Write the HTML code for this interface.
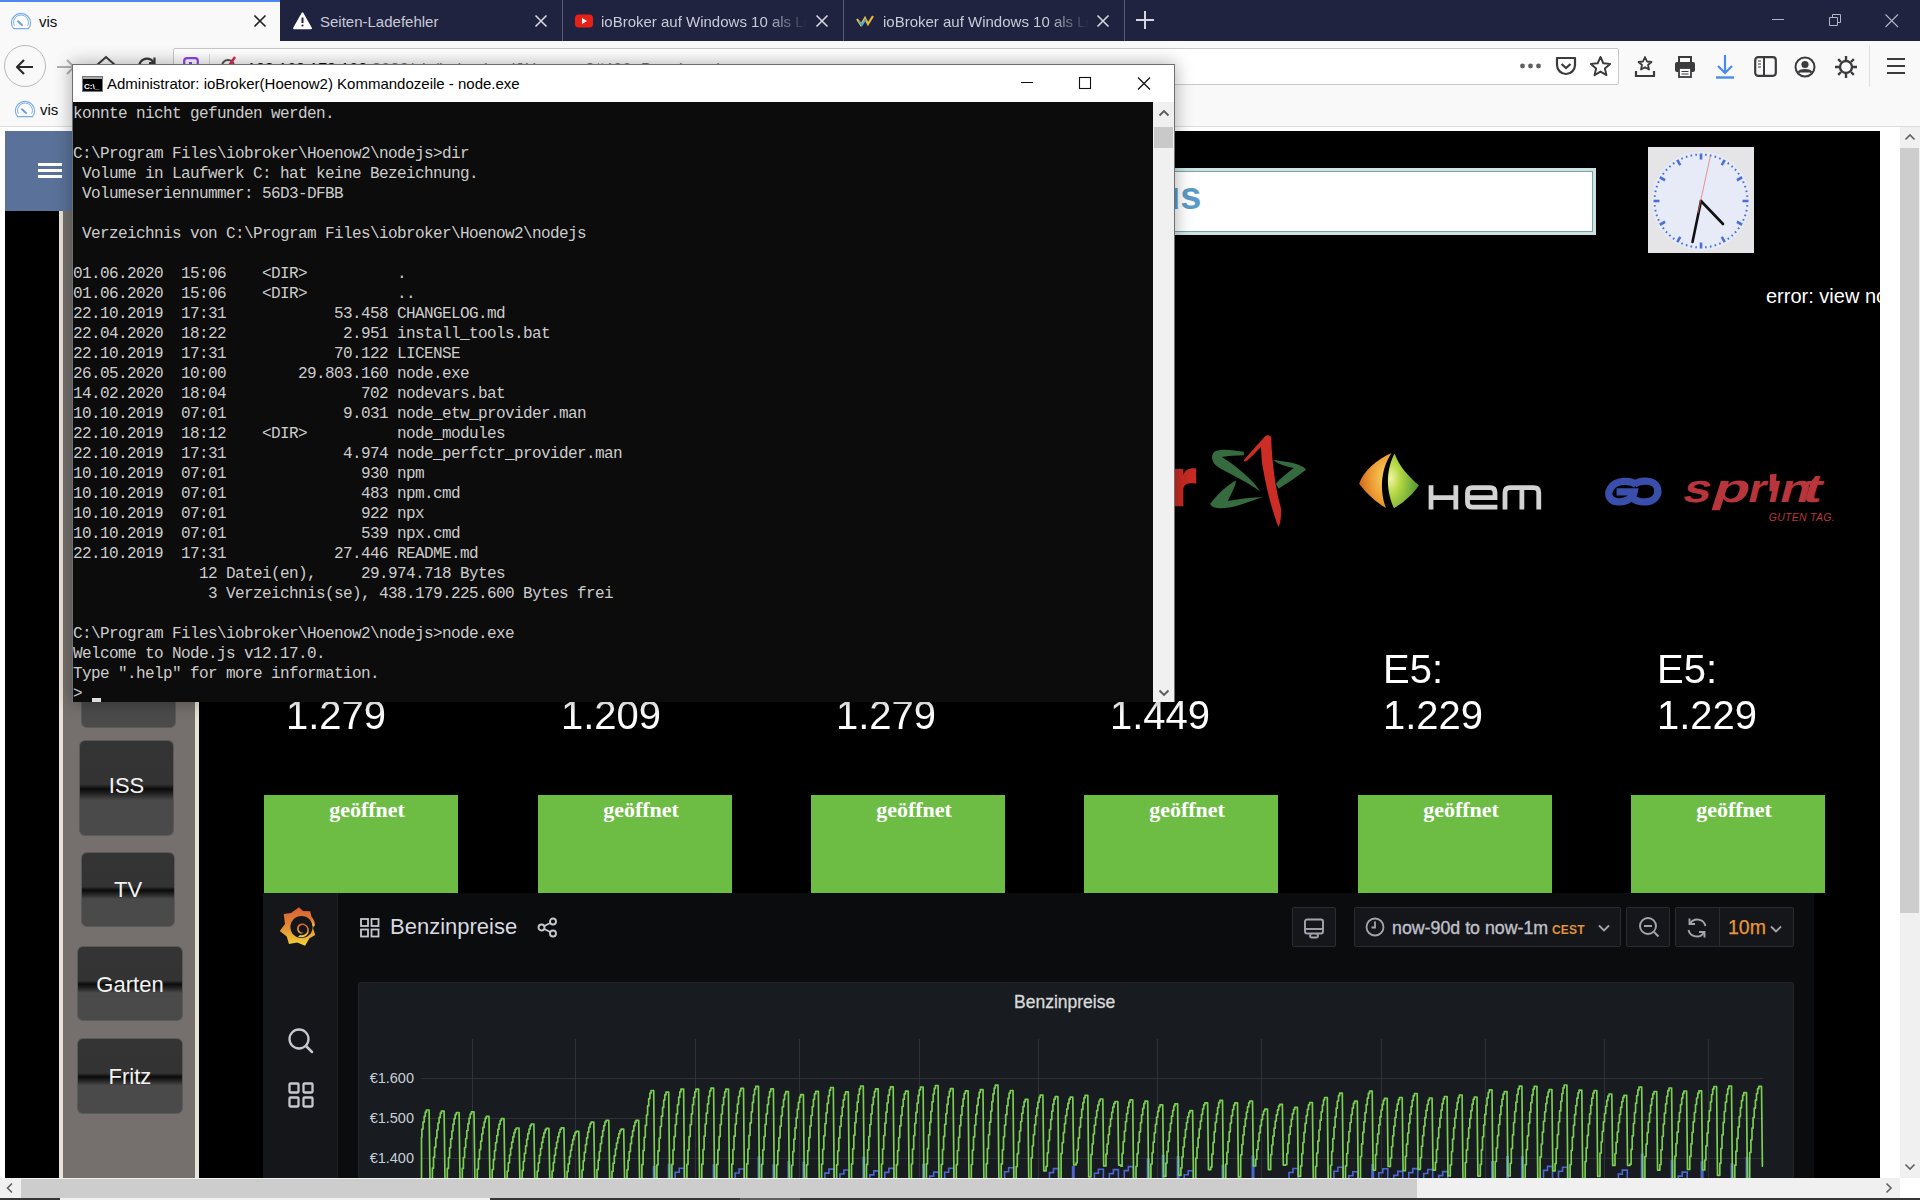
<!DOCTYPE html>
<html><head><meta charset="utf-8">
<style>
*{box-sizing:border-box;margin:0;padding:0}
html,body{width:1920px;height:1200px;overflow:hidden;background:#fff;font-family:"Liberation Sans",sans-serif}
.a{position:absolute}
.t{white-space:pre;line-height:1}
/* tabs */
#tabs{left:0;top:0;width:1920px;height:41px;background:#202340}
.tabtxt{font-size:15px;color:#c9cad8;top:14px}
.sep{top:0;width:1px;height:41px;background:#595b78}
#nav{left:0;top:41px;width:1920px;height:86px;background:#f9f9fa;border-bottom:1px solid #dcdcdf}
#page{left:0;top:127px;width:1900px;height:1051px;background:#fff}
#vis{left:5px;top:131px;width:1875px;height:1047px;background:#000;overflow:hidden}
.btn{border-radius:6px;border:1px solid #5a5a5a;background:linear-gradient(#343434 0%,#333 46%,#0b0b0b 51%,#222 56%,#4a4a4a 63%,#4a4a4a 100%);color:#f2f2f2;font-size:22px;text-align:center}
.price{font-size:40px;color:#fff;line-height:44.4px;white-space:pre;transform:scaleY(1.035);transform-origin:0 0}
.gbox{top:664px;width:194px;height:98px;background:#6dbd45;font-family:"Liberation Serif",serif;font-weight:bold;font-size:22px;color:#fff;text-align:center;line-height:1;padding-top:4px;padding-left:12px}
/* grafana */
#gf{left:258px;top:762px;width:1551px;height:285px;background:#0b0c0e}
.gbtn{background:#141619;border:1px solid #2a2c31;border-radius:2px}
/* console */
#con{left:72px;top:64px;width:1103px;height:638px;background:#fff;border:1px solid #6f6f6f;border-bottom:none;box-shadow:0 0 16px 1px rgba(0,0,0,0.3)}
#ctext{left:0px;top:37px;width:1080px;height:600px;background:#0c0c0c;color:#cccccc;font-family:"Liberation Mono",monospace;font-size:16px;letter-spacing:-0.6px;line-height:20px;white-space:pre;overflow:hidden;padding-top:2px}
</style></head><body>

<!-- ============ TAB STRIP ============ -->
<div id="tabs" class="a">
  <div class="a" style="left:0;top:0;width:280px;height:41px;background:#f9f9fa"></div>
  <div class="a" style="left:0;top:0;width:280px;height:2px;background:#4f86f4"></div>
  <svg class="a" style="left:10px;top:12px" width="22" height="18" viewBox="-1 -1 22 18"><path d="M2.6 15.6 C1 13.5 0.4 11.8 0.4 10 A9.6 9.6 0 0 1 19.6 10 C19.6 11.8 19 13.5 17.4 15.6 Z" fill="#fff" stroke="#7aaee8" stroke-width="1.2"/><path d="M3.4 12.8 A7.4 7.4 0 1 1 16.6 12.8" fill="none" stroke="#7aaee8" stroke-width="1"/><path d="M7 8.3 L11 12" stroke="#6a9ee0" stroke-width="2" stroke-linecap="round"/></svg>
  <div class="a t" style="left:39px;top:14px;font-size:15px;color:#0c0c0d">vis</div>
  <svg class="a" style="left:253px;top:14px" width="14" height="14"><path d="M1.5 1.5 L12.5 12.5 M12.5 1.5 L1.5 12.5" stroke="#222" stroke-width="1.6"/></svg>

  <svg class="a" style="left:293px;top:12px" width="19" height="18" viewBox="0 0 19 18"><path d="M9.5 1.2 L18 16.3 L1 16.3 Z" fill="#fff" stroke="#fff" stroke-width="1.8" stroke-linejoin="round"/><path d="M9.5 5.5 V11" stroke="#202340" stroke-width="2"/><circle cx="9.5" cy="13.5" r="1.1" fill="#202340"/></svg>
  <div class="a t tabtxt" style="left:320px">Seiten-Ladefehler</div>
  <svg class="a" style="left:534px;top:14px" width="14" height="14"><path d="M1.5 1.5 L12.5 12.5 M12.5 1.5 L1.5 12.5" stroke="#d6d6de" stroke-width="1.6"/></svg>
  <div class="a sep" style="left:562px"></div>

  <svg class="a" style="left:575px;top:14px" width="18" height="14"><rect x="0" y="0.5" width="18" height="13" rx="3.5" fill="#e62117"/><path d="M7 4 L12 7 L7 10 Z" fill="#fff"/></svg>
  <div class="a t tabtxt" style="left:601px;width:206px;overflow:hidden;-webkit-mask-image:linear-gradient(90deg,#000 80%,transparent 100%)">ioBroker auf Windows 10 als Linux</div>
  <svg class="a" style="left:815px;top:14px" width="14" height="14"><path d="M1.5 1.5 L12.5 12.5 M12.5 1.5 L1.5 12.5" stroke="#d6d6de" stroke-width="1.6"/></svg>
  <div class="a sep" style="left:843px"></div>

  <svg class="a" style="left:856px;top:15px" width="19" height="12" viewBox="0 0 19 12"><path d="M1 4 L5 10 L9 3 L12 9 L17 1" fill="none" stroke="#e9b938" stroke-width="2.2"/><path d="M3 6 L6 10 L10 4" fill="none" stroke="#3fa8e0" stroke-width="1.6"/></svg>
  <div class="a t tabtxt" style="left:883px;width:206px;overflow:hidden;-webkit-mask-image:linear-gradient(90deg,#000 80%,transparent 100%)">ioBroker auf Windows 10 als Linux</div>
  <svg class="a" style="left:1096px;top:14px" width="14" height="14"><path d="M1.5 1.5 L12.5 12.5 M12.5 1.5 L1.5 12.5" stroke="#d6d6de" stroke-width="1.6"/></svg>
  <div class="a sep" style="left:1124px"></div>
  <svg class="a" style="left:1136px;top:11px" width="20" height="20"><path d="M9 0 V18 M0 9 H18" stroke="#d6d6de" stroke-width="2"/></svg>

  <svg class="a" style="left:1770px;top:14px" width="16" height="12"><path d="M2 5.5 H14" stroke="#b4b4c2" stroke-width="1"/></svg>
  <svg class="a" style="left:1829px;top:14px" width="14" height="14"><path d="M0.5 3.5 H8.5 V11.5 H0.5 Z M3.5 3.5 V0.5 H11.5 V8.5 H8.5" fill="none" stroke="#b4b4c2" stroke-width="1"/></svg>
  <svg class="a" style="left:1885px;top:14px" width="14" height="14"><path d="M0.5 0.5 L13 13 M13 0.5 L0.5 13" stroke="#b4b4c2" stroke-width="1.1"/></svg>
</div>

<!-- ============ NAV + BOOKMARKS ============ -->
<div id="nav" class="a">
  <div class="a" style="left:4px;top:4px;width:42px;height:42px;border-radius:50%;border:1px solid #b9b9bb;background:#f9f9fa"></div>
  <svg class="a" style="left:14px;top:15px" width="22" height="22" viewBox="0 0 22 22"><path d="M19 11 H3 M10 4 L3 11 L10 18" fill="none" stroke="#2b2b2e" stroke-width="2.2" stroke-linejoin="round"/></svg>
  <svg class="a" style="left:55px;top:15px" width="22" height="22" viewBox="0 0 22 22"><path d="M2 11 H19 M12 4 L19 11 L12 18" fill="none" stroke="#b1b1b3" stroke-width="2"/></svg>
  <svg class="a" style="left:95px;top:13px" width="22" height="22" viewBox="0 0 22 22"><path d="M2 11 L11 3 L20 11" fill="none" stroke="#3b3b3d" stroke-width="2"/></svg>
  <svg class="a" style="left:136px;top:15px" width="22" height="22" viewBox="0 0 22 22"><path d="M17.5 6 A8 8 0 1 0 19 11" fill="none" stroke="#3b3b3d" stroke-width="2.2"/><path d="M18.5 1.5 V7 H13" fill="none" stroke="#3b3b3d" stroke-width="2.2"/></svg>
  <!-- URL bar -->
  <div class="a" style="left:173px;top:7px;width:1446px;height:37px;background:#fff;border:1px solid #c9c9cc;border-radius:2px"></div>
  <svg class="a" style="left:183px;top:16px" width="16" height="18"><path d="M1.2 4 Q1.2 1.2 4 1.2 H12 Q14.8 1.2 14.8 4 V9 C14.8 13 12 15.5 8 17 C4 15.5 1.2 13 1.2 9 Z" fill="none" stroke="#8f45e6" stroke-width="2.2"/><rect x="6" y="5" width="3" height="7" fill="#8f45e6"/></svg>
  <div class="a" style="left:209px;top:13px;width:1px;height:26px;background:#dcdcdf"></div>
  <svg class="a" style="left:219px;top:14px" width="20" height="20"><circle cx="9" cy="11" r="6" fill="none" stroke="#555" stroke-width="2"/><path d="M16 2 L5 18" stroke="#e22850" stroke-width="2.5"/></svg>
  <div class="a t" style="left:247px;top:21px;font-size:16px;color:#0c0c0d">192.168.178.102<span style="color:#737373;letter-spacing:0.35px">:8082/vis/index.html?Hoenow2#400_Benzinpreise</span></div>
  <svg class="a" style="left:1519px;top:21px" width="24" height="8"><circle cx="3.5" cy="4" r="2.4" fill="#5f5f62"/><circle cx="11.5" cy="4" r="2.4" fill="#5f5f62"/><circle cx="19.5" cy="4" r="2.4" fill="#5f5f62"/></svg>
  <svg class="a" style="left:1555px;top:15px" width="22" height="21" viewBox="0 0 22 21"><path d="M2 2 H20 V9 A9 9 0 0 1 2 9 Z" fill="none" stroke="#3b3b3d" stroke-width="2.2" stroke-linejoin="round"/><path d="M6.5 8 L11 12 L15.5 8" fill="none" stroke="#3b3b3d" stroke-width="2.2"/></svg>
  <svg class="a" style="left:1589px;top:14px" width="23" height="23" viewBox="0 0 24 24"><path d="M12 2 L14.9 8.6 L22 9.3 L16.6 14 L18.2 21 L12 17.3 L5.8 21 L7.4 14 L2 9.3 L9.1 8.6 Z" fill="none" stroke="#3b3b3d" stroke-width="2" stroke-linejoin="round"/></svg>
  <svg class="a" style="left:1633px;top:14px" width="24" height="24" viewBox="0 0 24 24"><path d="M12 2 L14 6.5 L18.5 7 L15 10 L16 14.5 L12 12.2 L8 14.5 L9 10 L5.5 7 L10 6.5 Z" fill="none" stroke="#3b3b3d" stroke-width="1.8" stroke-linejoin="round"/><path d="M3 16 V21 H21 V16" fill="none" stroke="#3b3b3d" stroke-width="2.2"/></svg>
  <svg class="a" style="left:1674px;top:14px" width="22" height="24" viewBox="0 0 22 24"><path d="M5 7 V2 H17 V7" fill="none" stroke="#3b3b3d" stroke-width="2"/><rect x="1" y="7" width="20" height="10" rx="2" fill="#3b3b3d"/><rect x="5" y="13" width="12" height="9" fill="#f9f9fa" stroke="#3b3b3d" stroke-width="1.8"/><path d="M7.5 16.5 H14.5 M7.5 19 H14.5" stroke="#3b3b3d" stroke-width="1"/></svg>
  <svg class="a" style="left:1714px;top:13px" width="22" height="26" viewBox="0 0 22 26"><path d="M11 1 V19 M4 12 L11 19 L18 12" fill="none" stroke="#4a8af0" stroke-width="2.2"/><path d="M2 23.5 H20" stroke="#4a8af0" stroke-width="2.4"/></svg>
  <svg class="a" style="left:1754px;top:15px" width="23" height="21" viewBox="0 0 23 21"><rect x="1.2" y="1.2" width="20.6" height="18.6" rx="3" fill="none" stroke="#3b3b3d" stroke-width="2.2"/><path d="M10 1 V20" stroke="#3b3b3d" stroke-width="2"/><path d="M4 5 H7 M4 8 H7 M4 11 H7" stroke="#3b3b3d" stroke-width="1.2"/></svg>
  <svg class="a" style="left:1794px;top:15px" width="22" height="22" viewBox="0 0 22 22"><circle cx="11" cy="11" r="9.5" fill="none" stroke="#3b3b3d" stroke-width="2"/><circle cx="11" cy="8.5" r="3.6" fill="#3b3b3d"/><path d="M4.5 16.5 C6 13 16 13 17.5 16.5" fill="#3b3b3d" stroke="#3b3b3d" stroke-width="2"/></svg>
  <svg class="a" style="left:1834px;top:14px" width="24" height="24" viewBox="0 0 24 24"><circle cx="12" cy="12" r="6" fill="none" stroke="#3b3b3d" stroke-width="2.4"/><path d="M12 1 V5 M12 19 V23 M1 12 H5 M19 12 H23 M4.2 4.2 L7 7 M17 17 L19.8 19.8 M4.2 19.8 L7 17 M17 7 L19.8 4.2" stroke="#3b3b3d" stroke-width="2.4"/></svg>
  <div class="a" style="left:1869px;top:4px;width:1px;height:42px;background:#e0e0e2"></div>
  <svg class="a" style="left:1887px;top:16px" width="18" height="18"><path d="M0 2 H18 M0 9 H18 M0 16 H18" stroke="#3b3b3d" stroke-width="2.2"/></svg>
  <!-- bookmarks -->
  <svg class="a" style="left:14px;top:59px" width="22" height="18" viewBox="-1 -1 22 18"><path d="M2.6 15.6 C1 13.5 0.4 11.8 0.4 10 A9.6 9.6 0 0 1 19.6 10 C19.6 11.8 19 13.5 17.4 15.6 Z" fill="#fff" stroke="#7aaee8" stroke-width="1.2"/><path d="M3.4 12.8 A7.4 7.4 0 1 1 16.6 12.8" fill="none" stroke="#7aaee8" stroke-width="1"/><path d="M7 8.3 L11 12" stroke="#6a9ee0" stroke-width="2" stroke-linecap="round"/></svg>
  <div class="a t" style="left:40px;top:61px;font-size:15px;color:#0c0c0d">vis</div>
</div>

<div id="page" class="a"></div>

<!-- ============ VIS CONTENT ============ -->
<div id="vis" class="a">
  <!-- header -->
  <div class="a" style="left:0;top:0;width:1000px;height:80px;background:#5a7299"></div>
  <div class="a" style="left:33px;top:32px;width:24px;height:3px;background:#fff"></div>
  <div class="a" style="left:33px;top:38px;width:24px;height:3px;background:#fff"></div>
  <div class="a" style="left:33px;top:44px;width:24px;height:3px;background:#fff"></div>
  <!-- sidebar -->
  <div class="a" style="left:54px;top:80px;width:140px;height:967px;background:#75706d;border-left:4px solid #e7e3d6;border-right:4px solid #e7e3d6"></div>
  <div class="a btn" style="left:76px;top:520px;width:95px;height:77px"></div>
  <div class="a btn" style="left:74px;top:609px;width:95px;height:96px;padding-top:32px">ISS</div>
  <div class="a btn" style="left:76px;top:721px;width:94px;height:75px;padding-top:24px">TV</div>
  <div class="a btn" style="left:72px;top:815px;width:106px;height:75px;padding-top:25px">Garten</div>
  <div class="a btn" style="left:72px;top:907px;width:106px;height:76px;padding-top:25px">Fritz</div>

  <!-- title box -->
  <div class="a" style="left:800px;top:37px;width:791px;height:67px;background:#fff;border:3px solid #cfe2e2;box-shadow:inset 0 0 0 1px #78a5a5"></div>
  <div class="a t" style="left:1152px;top:46px;font-size:38px;font-weight:bold;color:#5b9bc6">us</div>
  <!-- clock -->
  <svg class="a" style="left:1643px;top:16px" width="106" height="106" viewBox="0 0 106 106">
    <rect width="106" height="106" fill="#e5e5e7"/>
    <circle cx="53" cy="54" r="49.5" fill="#e7eaf7"/>
    <line x1="53.00" y1="12.50" x2="53.00" y2="6.50" stroke="#4b6fd9" stroke-width="2.6"/><line x1="57.76" y1="8.75" x2="57.97" y2="6.76" stroke="#4b6fd9" stroke-width="1.6"/><line x1="62.46" y1="9.49" x2="62.88" y2="7.54" stroke="#4b6fd9" stroke-width="1.6"/><line x1="67.06" y1="10.73" x2="67.68" y2="8.82" stroke="#4b6fd9" stroke-width="1.6"/><line x1="71.51" y1="12.43" x2="72.32" y2="10.61" stroke="#4b6fd9" stroke-width="1.6"/><line x1="73.75" y1="18.06" x2="76.75" y2="12.86" stroke="#4b6fd9" stroke-width="2.6"/><line x1="79.74" y1="17.19" x2="80.92" y2="15.57" stroke="#4b6fd9" stroke-width="1.6"/><line x1="83.45" y1="20.19" x2="84.78" y2="18.70" stroke="#4b6fd9" stroke-width="1.6"/><line x1="86.81" y1="23.55" x2="88.30" y2="22.22" stroke="#4b6fd9" stroke-width="1.6"/><line x1="89.81" y1="27.26" x2="91.43" y2="26.08" stroke="#4b6fd9" stroke-width="1.6"/><line x1="88.94" y1="33.25" x2="94.14" y2="30.25" stroke="#4b6fd9" stroke-width="2.6"/><line x1="94.57" y1="35.49" x2="96.39" y2="34.68" stroke="#4b6fd9" stroke-width="1.6"/><line x1="96.27" y1="39.94" x2="98.18" y2="39.32" stroke="#4b6fd9" stroke-width="1.6"/><line x1="97.51" y1="44.54" x2="99.46" y2="44.12" stroke="#4b6fd9" stroke-width="1.6"/><line x1="98.25" y1="49.24" x2="100.24" y2="49.03" stroke="#4b6fd9" stroke-width="1.6"/><line x1="94.50" y1="54.00" x2="100.50" y2="54.00" stroke="#4b6fd9" stroke-width="2.6"/><line x1="98.25" y1="58.76" x2="100.24" y2="58.97" stroke="#4b6fd9" stroke-width="1.6"/><line x1="97.51" y1="63.46" x2="99.46" y2="63.88" stroke="#4b6fd9" stroke-width="1.6"/><line x1="96.27" y1="68.06" x2="98.18" y2="68.68" stroke="#4b6fd9" stroke-width="1.6"/><line x1="94.57" y1="72.51" x2="96.39" y2="73.32" stroke="#4b6fd9" stroke-width="1.6"/><line x1="88.94" y1="74.75" x2="94.14" y2="77.75" stroke="#4b6fd9" stroke-width="2.6"/><line x1="89.81" y1="80.74" x2="91.43" y2="81.92" stroke="#4b6fd9" stroke-width="1.6"/><line x1="86.81" y1="84.45" x2="88.30" y2="85.78" stroke="#4b6fd9" stroke-width="1.6"/><line x1="83.45" y1="87.81" x2="84.78" y2="89.30" stroke="#4b6fd9" stroke-width="1.6"/><line x1="79.74" y1="90.81" x2="80.92" y2="92.43" stroke="#4b6fd9" stroke-width="1.6"/><line x1="73.75" y1="89.94" x2="76.75" y2="95.14" stroke="#4b6fd9" stroke-width="2.6"/><line x1="71.51" y1="95.57" x2="72.32" y2="97.39" stroke="#4b6fd9" stroke-width="1.6"/><line x1="67.06" y1="97.27" x2="67.68" y2="99.18" stroke="#4b6fd9" stroke-width="1.6"/><line x1="62.46" y1="98.51" x2="62.88" y2="100.46" stroke="#4b6fd9" stroke-width="1.6"/><line x1="57.76" y1="99.25" x2="57.97" y2="101.24" stroke="#4b6fd9" stroke-width="1.6"/><line x1="53.00" y1="95.50" x2="53.00" y2="101.50" stroke="#4b6fd9" stroke-width="2.6"/><line x1="48.24" y1="99.25" x2="48.03" y2="101.24" stroke="#4b6fd9" stroke-width="1.6"/><line x1="43.54" y1="98.51" x2="43.12" y2="100.46" stroke="#4b6fd9" stroke-width="1.6"/><line x1="38.94" y1="97.27" x2="38.32" y2="99.18" stroke="#4b6fd9" stroke-width="1.6"/><line x1="34.49" y1="95.57" x2="33.68" y2="97.39" stroke="#4b6fd9" stroke-width="1.6"/><line x1="32.25" y1="89.94" x2="29.25" y2="95.14" stroke="#4b6fd9" stroke-width="2.6"/><line x1="26.26" y1="90.81" x2="25.08" y2="92.43" stroke="#4b6fd9" stroke-width="1.6"/><line x1="22.55" y1="87.81" x2="21.22" y2="89.30" stroke="#4b6fd9" stroke-width="1.6"/><line x1="19.19" y1="84.45" x2="17.70" y2="85.78" stroke="#4b6fd9" stroke-width="1.6"/><line x1="16.19" y1="80.74" x2="14.57" y2="81.92" stroke="#4b6fd9" stroke-width="1.6"/><line x1="17.06" y1="74.75" x2="11.86" y2="77.75" stroke="#4b6fd9" stroke-width="2.6"/><line x1="11.43" y1="72.51" x2="9.61" y2="73.32" stroke="#4b6fd9" stroke-width="1.6"/><line x1="9.73" y1="68.06" x2="7.82" y2="68.68" stroke="#4b6fd9" stroke-width="1.6"/><line x1="8.49" y1="63.46" x2="6.54" y2="63.88" stroke="#4b6fd9" stroke-width="1.6"/><line x1="7.75" y1="58.76" x2="5.76" y2="58.97" stroke="#4b6fd9" stroke-width="1.6"/><line x1="11.50" y1="54.00" x2="5.50" y2="54.00" stroke="#4b6fd9" stroke-width="2.6"/><line x1="7.75" y1="49.24" x2="5.76" y2="49.03" stroke="#4b6fd9" stroke-width="1.6"/><line x1="8.49" y1="44.54" x2="6.54" y2="44.12" stroke="#4b6fd9" stroke-width="1.6"/><line x1="9.73" y1="39.94" x2="7.82" y2="39.32" stroke="#4b6fd9" stroke-width="1.6"/><line x1="11.43" y1="35.49" x2="9.61" y2="34.68" stroke="#4b6fd9" stroke-width="1.6"/><line x1="17.06" y1="33.25" x2="11.86" y2="30.25" stroke="#4b6fd9" stroke-width="2.6"/><line x1="16.19" y1="27.26" x2="14.57" y2="26.08" stroke="#4b6fd9" stroke-width="1.6"/><line x1="19.19" y1="23.55" x2="17.70" y2="22.22" stroke="#4b6fd9" stroke-width="1.6"/><line x1="22.55" y1="20.19" x2="21.22" y2="18.70" stroke="#4b6fd9" stroke-width="1.6"/><line x1="26.26" y1="17.19" x2="25.08" y2="15.57" stroke="#4b6fd9" stroke-width="1.6"/><line x1="32.25" y1="18.06" x2="29.25" y2="12.86" stroke="#4b6fd9" stroke-width="2.6"/><line x1="34.49" y1="12.43" x2="33.68" y2="10.61" stroke="#4b6fd9" stroke-width="1.6"/><line x1="38.94" y1="10.73" x2="38.32" y2="8.82" stroke="#4b6fd9" stroke-width="1.6"/><line x1="43.54" y1="9.49" x2="43.12" y2="7.54" stroke="#4b6fd9" stroke-width="1.6"/><line x1="48.24" y1="8.75" x2="48.03" y2="6.76" stroke="#4b6fd9" stroke-width="1.6"/>
    <path d="M53 54 L44.5 95" stroke="#111" stroke-width="2.6" stroke-linecap="round"/>
    <path d="M53 54 L75 77" stroke="#111" stroke-width="2.6" stroke-linecap="round"/>
    <path d="M62.5 8.5 L50 66" stroke="#e36a6a" stroke-width="0.7"/>
  </svg>
  <div class="a t" style="left:1761px;top:155px;font-size:20px;color:#fff">error: view not found</div>

  <!-- logos -->
  <svg class="a" style="left:1165px;top:294px" width="150" height="110" viewBox="0 0 1636 1200">
  <path fill="#c92b22" d="M0 885 L145 885 L145 700 C150 645 200 628 285 640 L285 475 C215 465 165 490 145 545 L145 480 L0 480 Z"/>
  <path fill="#356b3f" d="M805 292 C700 277 560 252 488 288 C440 322 448 415 535 465 C690 555 880 640 985 725 C925 625 760 470 565 348 C635 335 720 335 805 330 Z"/>
  <path fill="#356b3f" d="M722 605 C640 640 510 760 438 862 C470 930 620 910 735 882 C835 852 930 808 1012 788 C900 790 760 805 632 828 C665 750 712 675 722 605 Z"/>
  <path fill="#356b3f" d="M1125 378 C1195 440 1290 452 1350 470 C1275 530 1200 585 1155 640 L1185 695 C1290 625 1410 550 1485 485 C1425 410 1250 400 1125 378 Z"/>
  <path fill="#cc2e25" d="M808 382 C850 330 950 220 1040 120 C1075 102 1112 118 1105 160 C1112 400 1150 700 1210 905 C1215 1000 1205 1080 1182 1112 C1120 950 1050 700 1002 400 L992 240 C935 300 875 360 832 395 C815 402 800 392 808 382 Z"/>
</svg>
<svg class="a" style="left:1345px;top:309px" width="200" height="80" viewBox="0 0 1920 768">
  <defs>
    <radialGradient id="hor" cx="0.8" cy="0.45" r="0.9"><stop offset="0" stop-color="#f7d060"/><stop offset="0.45" stop-color="#eea035"/><stop offset="1" stop-color="#c85a1c"/></radialGradient>
    <radialGradient id="hgr" cx="0.1" cy="0.45" r="1"><stop offset="0" stop-color="#f0f5a0"/><stop offset="0.3" stop-color="#b5d843"/><stop offset="1" stop-color="#3c8a34"/></radialGradient>
  </defs>
  <path fill="url(#hor)" d="M398 125 C250 190 130 300 88 420 C150 505 250 600 345 652 C290 500 285 300 398 125 Z"/>
  <path fill="url(#hgr)" d="M428 130 C360 260 330 450 422 655 C520 600 620 505 662 435 C560 350 470 250 428 130 Z"/>
  <g fill="none" stroke="#d3d3d3" stroke-width="46">
    <path d="M778 435 V668 M1016 435 V668 M778 553 H1016"/>
    <path d="M1128 553 H1392 V505 Q1392 458 1345 458 H1175 Q1128 458 1128 505 V598 Q1128 645 1175 645 H1415"/>
    <path d="M1488 668 V505 Q1488 458 1535 458 H1765 Q1812 458 1812 505 V668 M1650 458 V668"/>
  </g>
</svg>
<svg class="a" style="left:1590px;top:329px" width="250" height="70" viewBox="0 0 1920 538">
  <g fill="none" stroke="#3a4fac" stroke-width="56">
    <path d="M318 190 C270 150 160 155 120 215 C85 270 115 325 190 322 C250 320 290 290 300 245 L165 245"/>
    <path d="M300 190 C340 150 450 150 475 205 C500 265 460 322 380 322 C330 322 300 305 285 290"/>
  </g>
  <text x="0" y="0" transform="translate(661 322) scale(1.25 1) skewX(-12)" font-family="Liberation Sans" font-weight="bold" font-size="305" fill="#b8353b">s</text><text x="0" y="0" transform="translate(883 322) scale(1.52 1) skewX(-12)" font-family="Liberation Sans" font-weight="bold" font-size="305" fill="#b8353b">p</text><text x="0" y="0" transform="translate(1160 322) scale(1.15 1) skewX(-12)" font-family="Liberation Sans" font-weight="bold" font-size="305" fill="#b8353b">r</text><text x="0" y="0" transform="translate(1317 322) scale(1.06 1) skewX(-12)" font-family="Liberation Sans" font-weight="bold" font-size="305" fill="#b8353b">ı</text><text x="0" y="0" transform="translate(1403 322) scale(1.25 1) skewX(-12)" font-family="Liberation Sans" font-weight="bold" font-size="305" fill="#b8353b">n</text><text x="0" y="0" transform="translate(1576 322) scale(1.42 1) skewX(-12)" font-family="Liberation Sans" font-weight="bold" font-size="305" fill="#b8353b">t</text>
  <path d="M1345 110 L1395 108 L1385 240 L1340 240 Z" fill="#b8353b"/>
  <text x="1335" y="470" font-family="Liberation Sans" font-style="italic" font-size="81" fill="#b8353b" letter-spacing="2">GUTEN TAG.</text>
</svg>


  <!-- prices -->
  <div class="a price" style="left:281px;top:515px">E5:
1.279</div>
  <div class="a price" style="left:556px;top:515px">E5:
1.209</div>
  <div class="a price" style="left:831px;top:515px">E5:
1.279</div>
  <div class="a price" style="left:1105px;top:515px">E5:
1.449</div>
  <div class="a price" style="left:1378px;top:515px">E5:
1.229</div>
  <div class="a price" style="left:1652px;top:515px">E5:
1.229</div>

  <div class="a gbox" style="left:259px">geöffnet</div>
  <div class="a gbox" style="left:533px">geöffnet</div>
  <div class="a gbox" style="left:806px">geöffnet</div>
  <div class="a gbox" style="left:1079px">geöffnet</div>
  <div class="a gbox" style="left:1353px">geöffnet</div>
  <div class="a gbox" style="left:1626px">geöffnet</div>

  <!-- grafana -->
  <div id="gf" class="a">
    <div class="a" style="left:0;top:0;width:75px;height:285px;background:#141619;border-right:1px solid #1c1e22"></div>
<svg class="a" style="left:0px;top:5px" width="75" height="75" viewBox="-70 -50 1500 1500">
  <defs><linearGradient id="glg" x1="0" y1="0" x2="0" y2="1"><stop offset="0" stop-color="#d95f35"/><stop offset="0.5" stop-color="#e08a35"/><stop offset="1" stop-color="#f4d33a"/></linearGradient></defs>
  <g transform="translate(70 -10)">
  <path fill="url(#glg)" d="M275 280 L420 262 L580 145 L660 218 L805 225 L830 335 C870 380 900 440 900 500 L860 560 L905 700 L790 765 L700 915 L545 850 L380 880 L335 730 L195 620 L300 480 Z"/>
  <circle cx="630" cy="540" r="222" fill="#141619"/>
  <path d="M830 330 C860 380 880 440 885 510 L850 520 C840 450 820 400 790 360 Z" fill="url(#glg)"/>
  <path d="M660 655 C560 690 500 600 520 540 C545 460 640 440 710 480 C790 530 800 640 720 700 C700 715 680 720 650 725" fill="none" stroke="url(#glg)" stroke-width="0"/>
  <path fill="url(#glg)" d="M685 650 C620 700 540 660 540 575 C540 490 620 455 690 480 C770 510 800 600 765 665 C730 730 650 760 560 735 L600 700 C660 715 720 690 740 640 C760 580 730 520 680 505 C620 490 570 530 575 580 C580 640 640 665 685 650 Z" transform="translate(0 0)"/>
  </g>
</svg>
<svg class="a" style="left:24px;top:134px" width="28" height="28" viewBox="0 0 28 28"><circle cx="12" cy="12" r="9.5" fill="none" stroke="#c7c7cf" stroke-width="2.3"/><path d="M19 19 L25 25" stroke="#c7c7cf" stroke-width="2.5" stroke-linecap="round"/></svg>
<svg class="a" style="left:25px;top:189px" width="26" height="26" viewBox="0 0 26 26"><g fill="none" stroke="#c7c7cf" stroke-width="2.3"><rect x="1.5" y="1.5" width="9" height="9" rx="1"/><rect x="15.5" y="1.5" width="9" height="9" rx="1"/><rect x="1.5" y="15.5" width="9" height="9" rx="1"/><rect x="15.5" y="15.5" width="9" height="9" rx="1"/></g></svg>

<svg class="a" style="left:97px;top:25px" width="20" height="20" viewBox="0 0 20 20"><g fill="none" stroke="#c7c7cf" stroke-width="1.8"><rect x="1" y="1" width="7" height="7"/><rect x="11.5" y="1" width="7" height="7"/><rect x="1" y="11.5" width="7" height="7"/><rect x="11.5" y="11.5" width="7" height="7"/></g></svg>
<div class="a t" style="left:127px;top:23px;font-size:22px;color:#d8d9e0">Benzinpreise</div>
<svg class="a" style="left:274px;top:24px" width="21" height="21" viewBox="0 0 21 21"><g fill="none" stroke="#c7c7cf" stroke-width="1.9"><circle cx="16" cy="4.5" r="3"/><circle cx="4.5" cy="10.5" r="3"/><circle cx="16" cy="16.5" r="3"/><path d="M7.2 9 L13.3 6 M7.2 12 L13.3 15"/></g></svg>

<div class="a gbtn" style="left:1029px;top:14px;width:44px;height:40px"></div>
<svg class="a" style="left:1040px;top:25px" width="22" height="21" viewBox="0 0 22 21"><g fill="none" stroke="#a3a5ad" stroke-width="1.9"><rect x="2" y="1.5" width="18" height="14" rx="2"/><path d="M2 11 H20"/><path d="M8 15.5 L7 18 Q7 19.5 8.5 19.5 H13.5 Q15 19.5 15 18 L14 15.5"/></g></svg>

<div class="a gbtn" style="left:1091px;top:14px;width:267px;height:40px"></div>
<svg class="a" style="left:1102px;top:24px" width="20" height="20" viewBox="0 0 20 20"><g fill="none" stroke="#a3a5ad" stroke-width="1.8"><circle cx="10" cy="10" r="8.5"/><path d="M10 4.5 V10.5 H6.5"/></g></svg>
<div class="a t" style="left:1129px;top:27px;font-size:17.8px;color:#c0c0ca;-webkit-text-stroke:0.35px #c0c0ca">now-90d to now-1m</div>
<div class="a t" style="left:1289px;top:31px;font-size:12px;font-weight:bold;color:#e0913a;letter-spacing:0.2px">CEST</div>
<svg class="a" style="left:1334px;top:30px" width="14" height="10"><path d="M2 2.5 L7 7.5 L12 2.5" fill="none" stroke="#a3a5ad" stroke-width="1.8"/></svg>

<div class="a gbtn" style="left:1363px;top:14px;width:44px;height:40px"></div>
<svg class="a" style="left:1375px;top:23px" width="22" height="22" viewBox="0 0 22 22"><g fill="none" stroke="#a3a5ad" stroke-width="1.9"><circle cx="10" cy="10" r="8"/><path d="M6 10 H14 M16 16 L20.5 20.5"/></g></svg>

<div class="a gbtn" style="left:1412px;top:14px;width:119px;height:40px"></div>
<div class="a" style="left:1456px;top:15px;width:1px;height:38px;background:#2a2c31"></div>
<svg class="a" style="left:1422px;top:24px" width="24" height="22" viewBox="0 0 24 22" transform="scale(-1,1)"><g fill="none" stroke="#a3a5ad" stroke-width="1.9"><path d="M3.5 9 A8.5 8.5 0 0 1 19 6.5 M20.5 13 A8.5 8.5 0 0 1 5 15.5"/><path d="M19.5 1.5 V7 H14 M4.5 20.5 V15 H10"/></g></svg>
<div class="a t" style="left:1465px;top:25px;font-size:19.5px;color:#e9963a;-webkit-text-stroke:0.25px #e9963a">10m</div>
<svg class="a" style="left:1506px;top:31px" width="14" height="10"><path d="M2 2.5 L7 7.5 L12 2.5" fill="none" stroke="#a3a5ad" stroke-width="1.8"/></svg>

<div class="a" style="left:95px;top:89px;width:1436px;height:200px;background:#181b1f;border:1px solid #202226;border-radius:2px"></div>
<div class="a t" style="left:751px;top:101px;width:100px;text-align:center;font-size:17.5px;color:#d8d9da;-webkit-text-stroke:0.3px #d8d9da">Benzinpreise</div>
<div class="a t" style="left:90px;top:178px;width:61px;text-align:right;font-size:14.5px;color:#c7d0d9">€1.600</div>
<div class="a t" style="left:90px;top:218px;width:61px;text-align:right;font-size:14.5px;color:#c7d0d9">€1.500</div>
<div class="a t" style="left:90px;top:258px;width:61px;text-align:right;font-size:14.5px;color:#c7d0d9">€1.400</div>
<svg class="a" style="left:-263px;top:-893px" width="1920" height="1200" viewBox="0 0 1920 1200">
  <g stroke="#2f3136" stroke-width="1">
    <path d="M421.5 1078.5 H1763 M421.5 1118.5 H1763 M421.5 1158.5 H1763"/>
    <path d="M472.5 1039 V1178 M575.5 1039 V1178 M695.5 1039 V1178 M799.5 1039 V1178 M919.5 1039 V1178 M1038.5 1039 V1178 M1157.5 1039 V1178 M1261.5 1039 V1178 M1381.5 1039 V1178 M1485.5 1039 V1178 M1604.5 1039 V1178 M1708.5 1039 V1178"/>
  </g>
  <path fill="none" stroke="#4a68d0" stroke-width="1.6" d="M653.5 1180 V1166.8 H654.9 V1180 M668.5 1180 V1164.6 H669.9 V1180 M675.2 1180 V1172.2 H679.2 V1168.2 H684.2 V1180 M713.4 1180 V1165.0 H714.8 V1180 M735.1 1180 V1173.0 H739.1 V1169.0 H744.1 V1180 M758.3 1180 V1157.2 H759.7 V1180 M773.2 1180 V1165.1 H774.6 V1180 M788.2 1180 V1161.7 H789.6 V1180 M803.2 1180 V1162.6 H804.6 V1180 M824.9 1180 V1173.1 H828.9 V1169.1 H833.9 V1180 M839.9 1180 V1174.0 H843.9 V1170.0 H848.9 V1180 M863.1 1180 V1157.6 H864.5 V1180 M869.8 1180 V1174.9 H873.8 V1170.9 H878.8 V1180 M884.8 1180 V1172.4 H888.8 V1168.4 H893.8 V1180 M922.9 1180 V1164.5 H924.3 V1180 M929.7 1180 V1176.1 H933.7 V1172.1 H938.7 V1180 M944.7 1180 V1172.2 H948.7 V1168.2 H953.7 V1180 M1004.6 1180 V1171.8 H1008.6 V1167.8 H1013.6 V1180 M1049.5 1180 V1172.6 H1053.5 V1168.6 H1058.5 V1180 M1072.6 1180 V1166.7 H1074.0 V1180 M1094.4 1180 V1173.2 H1098.4 V1169.2 H1103.4 V1180 M1109.4 1180 V1173.6 H1113.4 V1169.6 H1118.4 V1180 M1124.3 1180 V1170.6 H1128.3 V1166.6 H1133.3 V1180 M1147.5 1180 V1159.4 H1148.9 V1180 M1162.5 1180 V1155.5 H1163.9 V1180 M1177.4 1180 V1156.7 H1178.8 V1180 M1184.2 1180 V1174.8 H1188.2 V1170.8 H1193.2 V1180 M1222.3 1180 V1165.6 H1223.7 V1180 M1252.3 1180 V1156.3 H1253.7 V1180 M1289.0 1180 V1172.5 H1293.0 V1168.5 H1298.0 V1180 M1333.9 1180 V1171.3 H1337.9 V1167.3 H1342.9 V1180 M1348.9 1180 V1175.7 H1352.9 V1171.7 H1357.9 V1180 M1372.0 1180 V1164.8 H1373.4 V1180 M1378.8 1180 V1172.7 H1382.8 V1168.7 H1387.8 V1180 M1393.8 1180 V1175.4 H1397.8 V1171.4 H1402.8 V1180 M1408.8 1180 V1172.6 H1412.8 V1168.6 H1417.8 V1180 M1423.7 1180 V1173.5 H1427.7 V1169.5 H1432.7 V1180 M1438.7 1180 V1175.6 H1442.7 V1171.6 H1447.7 V1180 M1491.8 1180 V1161.8 H1493.2 V1180 M1506.8 1180 V1156.7 H1508.2 V1180 M1521.7 1180 V1157.0 H1523.1 V1180 M1543.5 1180 V1170.4 H1547.5 V1166.4 H1552.5 V1180 M1558.5 1180 V1171.2 H1562.5 V1167.2 H1567.5 V1180 M1618.3 1180 V1174.1 H1622.3 V1170.1 H1627.3 V1180 M1641.5 1180 V1154.4 H1642.9 V1180 M1671.4 1180 V1160.5 H1672.8 V1180 M1678.2 1180 V1176.1 H1682.2 V1172.1 H1687.2 V1180 M1701.4 1180 V1162.1 H1702.8 V1180 M1731.3 1180 V1164.0 H1732.7 V1180 M1746.3 1180 V1157.8 H1747.7 V1180"/><polyline fill="none" stroke="#7acf50" stroke-width="1.7" stroke-linejoin="round" points="421.5,1180.0 421.5,1180.0 421.5,1168.0 421.5,1168.0 421.5,1156.8 421.5,1156.8 421.5,1146.6 421.5,1146.6 421.5,1137.3 421.9,1137.3 421.9,1129.1 423.0,1129.1 423.0,1122.1 424.2,1122.1 424.2,1116.3 425.3,1116.3 425.3,1112.1 426.4,1112.1 426.4,1110.0 428.2,1110.0 429.1,1110.0 430.0,1180.0 431.2,1180.0 432.4,1180.0 432.4,1168.2 433.5,1168.2 433.5,1157.2 434.6,1157.2 434.6,1147.1 435.8,1147.1 435.8,1138.0 436.9,1138.0 436.9,1130.0 438.0,1130.0 438.0,1123.0 439.1,1123.0 439.1,1117.4 440.3,1117.4 440.3,1113.2 441.4,1113.2 441.4,1111.1 443.2,1111.1 444.1,1111.1 445.0,1180.0 446.2,1180.0 447.3,1180.0 447.3,1168.4 448.5,1168.4 448.5,1157.7 449.6,1157.7 449.6,1147.8 450.7,1147.8 450.7,1138.9 451.9,1138.9 451.9,1131.0 453.0,1131.0 453.0,1124.2 454.1,1124.2 454.1,1118.6 455.2,1118.6 455.2,1114.5 456.4,1114.5 456.4,1112.5 458.2,1112.5 459.1,1112.5 460.0,1180.0 461.2,1180.0 462.3,1180.0 462.3,1168.3 463.4,1168.3 463.4,1157.5 464.6,1157.5 464.6,1147.5 465.7,1147.5 465.7,1138.5 466.8,1138.5 466.8,1130.5 468.0,1130.5 468.0,1123.7 469.1,1123.7 469.1,1118.1 470.2,1118.1 470.2,1114.0 471.4,1114.0 471.4,1111.9 473.1,1111.9 474.0,1111.9 474.9,1180.0 476.1,1180.0 477.3,1180.0 477.3,1169.1 478.4,1169.1 478.4,1158.9 479.5,1158.9 479.5,1149.6 480.7,1149.6 480.7,1141.2 481.8,1141.2 481.8,1133.8 482.9,1133.8 482.9,1127.4 484.1,1127.4 484.1,1122.1 485.2,1122.1 485.2,1118.3 486.3,1118.3 486.3,1116.4 488.1,1116.4 489.0,1116.4 489.9,1180.0 491.1,1180.0 492.2,1180.0 492.2,1169.5 493.4,1169.5 493.4,1159.7 494.5,1159.7 494.5,1150.7 495.6,1150.7 495.6,1142.6 496.8,1142.6 496.8,1135.5 497.9,1135.5 497.9,1129.3 499.0,1129.3 499.0,1124.2 500.2,1124.2 500.2,1120.5 501.3,1120.5 501.3,1118.7 503.1,1118.7 504.0,1118.7 504.9,1180.0 506.1,1180.0 507.2,1180.0 507.2,1171.1 508.3,1171.1 508.3,1162.8 509.5,1162.8 509.5,1155.2 510.6,1155.2 510.6,1148.3 511.7,1148.3 511.7,1142.2 512.9,1142.2 512.9,1136.9 514.0,1136.9 514.0,1132.7 515.1,1132.7 515.1,1129.5 516.3,1129.5 516.3,1128.0 518.1,1128.0 519.0,1128.0 519.9,1180.0 521.1,1180.0 522.2,1180.0 522.2,1170.4 523.3,1170.4 523.3,1161.5 524.4,1161.5 524.4,1153.3 525.6,1153.3 525.6,1145.9 526.7,1145.9 526.7,1139.3 527.8,1139.3 527.8,1133.7 529.0,1133.7 529.0,1129.1 530.1,1129.1 530.1,1125.7 531.2,1125.7 531.2,1124.0 533.0,1124.0 533.9,1124.0 534.8,1180.0 536.0,1180.0 537.2,1180.0 537.2,1171.1 538.3,1171.1 538.3,1162.9 539.4,1162.9 539.4,1155.3 540.5,1155.3 540.5,1148.5 541.7,1148.5 541.7,1142.4 542.8,1142.4 542.8,1137.2 543.9,1137.2 543.9,1132.9 545.1,1132.9 545.1,1129.8 546.2,1129.8 546.2,1128.3 548.0,1128.3 548.9,1128.3 549.8,1180.0 551.0,1180.0 552.1,1180.0 552.1,1171.0 553.3,1171.0 553.3,1162.7 554.4,1162.7 554.4,1155.1 555.5,1155.1 555.5,1148.2 556.6,1148.2 556.6,1142.0 557.8,1142.0 557.8,1136.8 558.9,1136.8 558.9,1132.5 560.0,1132.5 560.0,1129.3 561.2,1129.3 561.2,1127.8 563.0,1127.8 563.9,1127.8 564.8,1180.0 566.0,1180.0 567.1,1180.0 567.1,1171.6 568.2,1171.6 568.2,1163.9 569.4,1163.9 569.4,1156.7 570.5,1156.7 570.5,1150.3 571.6,1150.3 571.6,1144.6 572.7,1144.6 572.7,1139.7 573.9,1139.7 573.9,1135.7 575.0,1135.7 575.0,1132.7 576.1,1132.7 576.1,1131.3 577.9,1131.3 578.8,1131.3 579.7,1180.0 580.9,1180.0 582.1,1180.0 582.1,1170.1 583.2,1170.1 583.2,1160.8 584.3,1160.8 584.3,1152.4 585.5,1152.4 585.5,1144.7 586.6,1144.7 586.6,1137.9 587.7,1137.9 587.7,1132.1 588.8,1132.1 588.8,1127.3 590.0,1127.3 590.0,1123.8 591.1,1123.8 591.1,1122.1 592.9,1122.1 593.8,1122.1 594.7,1180.0 595.9,1180.0 597.0,1180.0 597.0,1169.7 598.2,1169.7 598.2,1160.2 599.3,1160.2 599.3,1151.5 600.4,1151.5 600.4,1143.6 601.6,1143.6 601.6,1136.6 602.7,1136.6 602.7,1130.6 603.8,1130.6 603.8,1125.6 604.9,1125.6 604.9,1122.0 606.1,1122.0 606.1,1120.3 607.9,1120.3 608.8,1120.3 609.7,1180.0 610.9,1180.0 612.0,1180.0 612.0,1171.3 613.1,1171.3 613.1,1163.2 614.3,1163.2 614.3,1155.7 615.4,1155.7 615.4,1149.0 616.5,1149.0 616.5,1143.0 617.7,1143.0 617.7,1137.9 618.8,1137.9 618.8,1133.7 619.9,1133.7 619.9,1130.6 621.1,1130.6 621.1,1129.1 622.8,1129.1 623.7,1129.1 624.6,1180.0 625.8,1180.0 627.0,1180.0 627.0,1169.8 628.1,1169.8 628.1,1160.3 629.2,1160.3 629.2,1151.6 630.4,1151.6 630.4,1143.7 631.5,1143.7 631.5,1136.7 632.6,1136.7 632.6,1130.7 633.8,1130.7 633.8,1125.8 634.9,1125.8 634.9,1122.2 636.0,1122.2 636.0,1120.4 637.8,1120.4 638.7,1120.4 639.6,1180.0 640.8,1180.0 641.9,1180.0 641.9,1164.6 643.1,1164.6 643.1,1150.4 644.2,1150.4 644.2,1137.3 645.3,1137.3 645.3,1125.4 646.5,1125.4 646.5,1115.0 647.6,1115.0 647.6,1105.9 648.7,1105.9 648.7,1098.6 649.9,1098.6 649.9,1093.2 651.0,1093.2 651.0,1090.5 652.8,1090.5 653.7,1090.5 654.6,1180.0 655.8,1180.0 656.9,1180.0 656.9,1164.9 658.0,1164.9 658.0,1150.9 659.2,1150.9 659.2,1138.1 660.3,1138.1 660.3,1126.5 661.4,1126.5 661.4,1116.2 662.6,1116.2 662.6,1107.4 663.7,1107.4 663.7,1100.1 664.8,1100.1 664.8,1094.8 666.0,1094.8 666.0,1092.2 667.8,1092.2 668.7,1092.2 669.6,1180.0 670.8,1180.0 671.9,1180.0 671.9,1164.4 673.0,1164.4 673.0,1149.9 674.1,1149.9 674.1,1136.6 675.3,1136.6 675.3,1124.6 676.4,1124.6 676.4,1113.9 677.5,1113.9 677.5,1104.7 678.7,1104.7 678.7,1097.2 679.8,1097.2 679.8,1091.8 680.9,1091.8 680.9,1089.1 682.7,1089.1 683.6,1089.1 684.5,1180.0 685.7,1180.0 686.9,1180.0 686.9,1164.4 688.0,1164.4 688.0,1149.9 689.1,1149.9 689.1,1136.6 690.2,1136.6 690.2,1124.6 691.4,1124.6 691.4,1113.9 692.5,1113.9 692.5,1104.7 693.6,1104.7 693.6,1097.3 694.8,1097.3 694.8,1091.8 695.9,1091.8 695.9,1089.1 697.7,1089.1 698.6,1089.1 699.5,1180.0 700.7,1180.0 701.8,1180.0 701.8,1164.2 703.0,1164.2 703.0,1149.6 704.1,1149.6 704.1,1136.1 705.2,1136.1 705.2,1124.0 706.3,1124.0 706.3,1113.2 707.5,1113.2 707.5,1103.9 708.6,1103.9 708.6,1096.4 709.7,1096.4 709.7,1090.8 710.9,1090.8 710.9,1088.1 712.7,1088.1 713.6,1088.1 714.5,1180.0 715.7,1180.0 716.8,1180.0 716.8,1164.4 717.9,1164.4 717.9,1149.9 719.1,1149.9 719.1,1136.6 720.2,1136.6 720.2,1124.6 721.3,1124.6 721.3,1114.0 722.4,1114.0 722.4,1104.8 723.6,1104.8 723.6,1097.3 724.7,1097.3 724.7,1091.9 725.8,1091.9 725.8,1089.2 727.6,1089.2 728.5,1089.2 729.4,1180.0 730.6,1180.0 731.8,1180.0 731.8,1164.2 732.9,1164.2 732.9,1149.6 734.0,1149.6 734.0,1136.2 735.2,1136.2 735.2,1124.1 736.3,1124.1 736.3,1113.3 737.4,1113.3 737.4,1104.1 738.5,1104.1 738.5,1096.5 739.7,1096.5 739.7,1091.0 740.8,1091.0 740.8,1088.3 742.6,1088.3 743.5,1088.3 744.4,1180.0 745.6,1180.0 746.7,1180.0 746.7,1163.9 747.9,1163.9 747.9,1149.0 749.0,1149.0 749.0,1135.3 750.1,1135.3 750.1,1122.9 751.3,1122.9 751.3,1111.9 752.4,1111.9 752.4,1102.4 753.5,1102.4 753.5,1094.7 754.6,1094.7 754.6,1089.1 755.8,1089.1 755.8,1086.3 757.6,1086.3 758.5,1086.3 759.4,1180.0 760.6,1180.0 761.7,1180.0 761.7,1164.3 762.8,1164.3 762.8,1149.8 764.0,1149.8 764.0,1136.5 765.1,1136.5 765.1,1124.4 766.2,1124.4 766.2,1113.8 767.4,1113.8 767.4,1104.6 768.5,1104.6 768.5,1097.1 769.6,1097.1 769.6,1091.6 770.8,1091.6 770.8,1088.9 772.5,1088.9 773.4,1088.9 774.3,1180.0 775.5,1180.0 776.7,1180.0 776.7,1164.8 777.8,1164.8 777.8,1150.7 778.9,1150.7 778.9,1137.8 780.1,1137.8 780.1,1126.1 781.2,1126.1 781.2,1115.8 782.3,1115.8 782.3,1106.9 783.5,1106.9 783.5,1099.6 784.6,1099.6 784.6,1094.3 785.7,1094.3 785.7,1091.6 787.5,1091.6 788.4,1091.6 789.3,1180.0 790.5,1180.0 791.6,1180.0 791.6,1165.3 792.8,1165.3 792.8,1151.7 793.9,1151.7 793.9,1139.2 795.0,1139.2 795.0,1127.9 796.2,1127.9 796.2,1117.9 797.3,1117.9 797.3,1109.3 798.4,1109.3 798.4,1102.3 799.6,1102.3 799.6,1097.1 800.7,1097.1 800.7,1094.6 802.5,1094.6 803.4,1094.6 804.3,1180.0 805.5,1180.0 806.6,1180.0 806.6,1164.8 807.7,1164.8 807.7,1150.6 808.9,1150.6 808.9,1137.7 810.0,1137.7 810.0,1125.9 811.1,1125.9 811.1,1115.5 812.3,1115.5 812.3,1106.6 813.4,1106.6 813.4,1099.3 814.5,1099.3 814.5,1093.9 815.7,1093.9 815.7,1091.3 817.5,1091.3 818.4,1091.3 819.3,1180.0 820.5,1180.0 821.6,1180.0 821.6,1164.1 822.7,1164.1 822.7,1149.4 823.8,1149.4 823.8,1135.8 825.0,1135.8 825.0,1123.6 826.1,1123.6 826.1,1112.8 827.2,1112.8 827.2,1103.4 828.4,1103.4 828.4,1095.8 829.5,1095.8 829.5,1090.2 830.6,1090.2 830.6,1087.5 832.4,1087.5 833.3,1087.5 834.2,1180.0 835.4,1180.0 836.6,1180.0 836.6,1164.9 837.7,1164.9 837.7,1150.8 838.8,1150.8 838.8,1137.9 839.9,1137.9 839.9,1126.3 841.1,1126.3 841.1,1115.9 842.2,1115.9 842.2,1107.1 843.3,1107.1 843.3,1099.8 844.5,1099.8 844.5,1094.5 845.6,1094.5 845.6,1091.9 847.4,1091.9 848.3,1091.9 849.2,1180.0 850.4,1180.0 851.5,1180.0 851.5,1163.9 852.7,1163.9 852.7,1148.9 853.8,1148.9 853.8,1135.2 854.9,1135.2 854.9,1122.7 856.0,1122.7 856.0,1111.7 857.2,1111.7 857.2,1102.2 858.3,1102.2 858.3,1094.5 859.4,1094.5 859.4,1088.8 860.6,1088.8 860.6,1086.0 862.4,1086.0 863.3,1086.0 864.2,1180.0 865.4,1180.0 866.5,1180.0 866.5,1164.4 867.6,1164.4 867.6,1149.8 868.8,1149.8 868.8,1136.5 869.9,1136.5 869.9,1124.5 871.0,1124.5 871.0,1113.8 872.1,1113.8 872.1,1104.6 873.3,1104.6 873.3,1097.1 874.4,1097.1 874.4,1091.6 875.5,1091.6 875.5,1088.9 877.3,1088.9 878.2,1088.9 879.1,1180.0 880.3,1180.0 881.5,1180.0 881.5,1164.0 882.6,1164.0 882.6,1149.1 883.7,1149.1 883.7,1135.5 884.9,1135.5 884.9,1123.2 886.0,1123.2 886.0,1112.2 887.1,1112.2 887.1,1102.8 888.2,1102.8 888.2,1095.2 889.4,1095.2 889.4,1089.5 890.5,1089.5 890.5,1086.8 892.3,1086.8 893.2,1086.8 894.1,1180.0 895.3,1180.0 896.4,1180.0 896.4,1164.7 897.6,1164.7 897.6,1150.6 898.7,1150.6 898.7,1137.6 899.8,1137.6 899.8,1125.8 901.0,1125.8 901.0,1115.4 902.1,1115.4 902.1,1106.5 903.2,1106.5 903.2,1099.2 904.3,1099.2 904.3,1093.8 905.5,1093.8 905.5,1091.2 907.3,1091.2 908.2,1091.2 909.1,1180.0 910.3,1180.0 911.4,1180.0 911.4,1164.0 912.5,1164.0 912.5,1149.2 913.7,1149.2 913.7,1135.6 914.8,1135.6 914.8,1123.3 915.9,1123.3 915.9,1112.4 917.1,1112.4 917.1,1103.1 918.2,1103.1 918.2,1095.4 919.3,1095.4 919.3,1089.8 920.5,1089.8 920.5,1087.0 922.2,1087.0 923.1,1087.0 924.0,1180.0 925.2,1180.0 926.4,1180.0 926.4,1163.8 927.5,1163.8 927.5,1148.7 928.6,1148.7 928.6,1134.9 929.8,1134.9 929.8,1122.4 930.9,1122.4 930.9,1111.3 932.0,1111.3 932.0,1101.8 933.2,1101.8 933.2,1094.0 934.3,1094.0 934.3,1088.3 935.4,1088.3 935.4,1085.5 937.2,1085.5 938.1,1085.5 939.0,1180.0 940.2,1180.0 941.3,1180.0 941.3,1164.3 942.5,1164.3 942.5,1149.7 943.6,1149.7 943.6,1136.4 944.7,1136.4 944.7,1124.3 945.9,1124.3 945.9,1113.6 947.0,1113.6 947.0,1104.4 948.1,1104.4 948.1,1096.9 949.3,1096.9 949.3,1091.3 950.4,1091.3 950.4,1088.6 952.2,1088.6 953.1,1088.6 954.0,1180.0 955.2,1180.0 956.3,1180.0 956.3,1164.7 957.4,1164.7 957.4,1150.5 958.6,1150.5 958.6,1137.4 959.7,1137.4 959.7,1125.7 960.8,1125.7 960.8,1115.2 962.0,1115.2 962.0,1106.2 963.1,1106.2 963.1,1098.9 964.2,1098.9 964.2,1093.5 965.4,1093.5 965.4,1090.8 967.2,1090.8 968.1,1090.8 969.0,1180.0 970.2,1180.0 971.3,1180.0 971.3,1164.5 972.4,1164.5 972.4,1150.1 973.5,1150.1 973.5,1136.9 974.7,1136.9 974.7,1125.0 975.8,1125.0 975.8,1114.4 976.9,1114.4 976.9,1105.3 978.1,1105.3 978.1,1097.9 979.2,1097.9 979.2,1092.4 980.3,1092.4 980.3,1089.7 982.1,1089.7 983.0,1089.7 983.9,1180.0 985.1,1180.0 986.3,1180.0 986.3,1163.7 987.4,1163.7 987.4,1148.6 988.5,1148.6 988.5,1134.8 989.6,1134.8 989.6,1122.2 990.8,1122.2 990.8,1111.1 991.9,1111.1 991.9,1101.6 993.0,1101.6 993.0,1093.8 994.2,1093.8 994.2,1088.0 995.3,1088.0 995.3,1085.2 997.1,1085.2 998.0,1085.2 998.9,1180.0 1000.1,1180.0 1001.2,1180.0 1001.2,1163.9 1002.4,1163.9 1002.4,1149.8 1003.5,1149.8 1003.5,1136.8 1004.6,1136.8 1004.6,1125.1 1005.7,1125.1 1005.7,1114.7 1006.9,1114.7 1006.9,1105.7 1008.0,1105.7 1008.0,1098.4 1009.1,1098.4 1009.1,1093.1 1010.3,1093.1 1010.3,1090.5 1012.1,1090.5 1013.0,1090.5 1013.9,1179.2 1015.1,1179.2 1016.2,1179.2 1016.2,1166.6 1017.3,1166.6 1017.3,1153.7 1018.5,1153.7 1018.5,1141.8 1019.6,1141.8 1019.6,1131.0 1020.7,1131.0 1020.7,1121.5 1021.8,1121.5 1021.8,1113.3 1023.0,1113.3 1023.0,1106.6 1024.1,1106.6 1024.1,1101.7 1025.2,1101.7 1025.2,1099.3 1027.0,1099.3 1027.9,1099.3 1028.8,1180.6 1030.0,1180.6 1031.2,1180.6 1031.2,1157.8 1032.3,1157.8 1032.3,1145.8 1033.4,1145.8 1033.4,1134.7 1034.6,1134.7 1034.6,1124.7 1035.7,1124.7 1035.7,1115.8 1036.8,1115.8 1036.8,1108.2 1037.9,1108.2 1037.9,1102.0 1039.1,1102.0 1039.1,1097.4 1040.2,1097.4 1040.2,1095.2 1042.0,1095.2 1042.9,1095.2 1043.8,1170.8 1045.0,1170.8 1046.1,1170.8 1046.1,1166.3 1047.3,1166.3 1047.3,1152.9 1048.4,1152.9 1048.4,1140.6 1049.5,1140.6 1049.5,1129.5 1050.7,1129.5 1050.7,1119.6 1051.8,1119.6 1051.8,1111.2 1052.9,1111.2 1052.9,1104.2 1054.0,1104.2 1054.0,1099.2 1055.2,1099.2 1055.2,1096.7 1057.0,1096.7 1057.9,1096.7 1058.8,1180.7 1060.0,1180.7 1061.1,1180.7 1061.1,1153.4 1062.2,1153.4 1062.2,1142.6 1063.4,1142.6 1063.4,1132.6 1064.5,1132.6 1064.5,1123.7 1065.6,1123.7 1065.6,1115.7 1066.8,1115.7 1066.8,1108.9 1067.9,1108.9 1067.9,1103.3 1069.0,1103.3 1069.0,1099.2 1070.2,1099.2 1070.2,1097.2 1071.9,1097.2 1072.8,1097.2 1073.7,1165.0 1074.9,1165.0 1076.1,1165.0 1076.1,1162.8 1077.2,1162.8 1077.2,1149.8 1078.3,1149.8 1078.3,1137.9 1079.5,1137.9 1079.5,1127.1 1080.6,1127.1 1080.6,1117.6 1081.7,1117.6 1081.7,1109.4 1082.9,1109.4 1082.9,1102.7 1084.0,1102.7 1084.0,1097.8 1085.1,1097.8 1085.1,1095.4 1086.9,1095.4 1087.8,1095.4 1088.7,1176.8 1089.9,1176.8 1091.0,1176.8 1091.0,1154.4 1092.2,1154.4 1092.2,1143.8 1093.3,1143.8 1093.3,1134.0 1094.4,1134.0 1094.4,1125.1 1095.6,1125.1 1095.6,1117.3 1096.7,1117.3 1096.7,1110.5 1097.8,1110.5 1097.8,1105.0 1099.0,1105.0 1099.0,1101.0 1100.1,1101.0 1100.1,1099.0 1101.9,1099.0 1102.8,1099.0 1103.7,1165.9 1104.9,1165.9 1106.0,1165.9 1106.0,1154.1 1107.1,1154.1 1107.1,1144.0 1108.3,1144.0 1108.3,1134.7 1109.4,1134.7 1109.4,1126.3 1110.5,1126.3 1110.5,1118.8 1111.7,1118.8 1111.7,1112.4 1112.8,1112.4 1112.8,1107.2 1113.9,1107.2 1113.9,1103.4 1115.1,1103.4 1115.1,1101.5 1116.9,1101.5 1117.8,1101.5 1118.7,1165.1 1119.9,1165.1 1121.0,1165.1 1121.0,1166.2 1122.1,1166.2 1122.1,1153.4 1123.2,1153.4 1123.2,1141.7 1124.4,1141.7 1124.4,1131.1 1125.5,1131.1 1125.5,1121.7 1126.6,1121.7 1126.6,1113.6 1127.8,1113.6 1127.8,1107.0 1128.9,1107.0 1128.9,1102.2 1130.0,1102.2 1130.0,1099.8 1131.8,1099.8 1132.7,1099.8 1133.6,1180.0 1134.8,1180.0 1136.0,1180.0 1136.0,1166.3 1137.1,1166.3 1137.1,1153.7 1138.2,1153.7 1138.2,1142.3 1139.3,1142.3 1139.3,1131.9 1140.5,1131.9 1140.5,1122.7 1141.6,1122.7 1141.6,1114.8 1142.7,1114.8 1142.7,1108.3 1143.9,1108.3 1143.9,1103.6 1145.0,1103.6 1145.0,1101.2 1146.8,1101.2 1147.7,1101.2 1148.6,1179.7 1149.8,1179.7 1150.9,1179.7 1150.9,1164.0 1152.1,1164.0 1152.1,1152.7 1153.2,1152.7 1153.2,1142.2 1154.3,1142.2 1154.3,1132.8 1155.4,1132.8 1155.4,1124.4 1156.6,1124.4 1156.6,1117.2 1157.7,1117.2 1157.7,1111.3 1158.8,1111.3 1158.8,1107.0 1160.0,1107.0 1160.0,1104.8 1161.8,1104.8 1162.7,1104.8 1163.6,1176.3 1164.8,1176.3 1165.9,1176.3 1165.9,1163.1 1167.0,1163.1 1167.0,1151.7 1168.2,1151.7 1168.2,1141.2 1169.3,1141.2 1169.3,1131.8 1170.4,1131.8 1170.4,1123.4 1171.5,1123.4 1171.5,1116.2 1172.7,1116.2 1172.7,1110.3 1173.8,1110.3 1173.8,1106.0 1174.9,1106.0 1174.9,1103.8 1176.7,1103.8 1177.6,1103.8 1178.5,1175.4 1179.7,1175.4 1180.9,1175.4 1180.9,1167.9 1182.0,1167.9 1182.0,1156.9 1183.1,1156.9 1183.1,1146.8 1184.3,1146.8 1184.3,1137.6 1185.4,1137.6 1185.4,1129.5 1186.5,1129.5 1186.5,1122.5 1187.6,1122.5 1187.6,1116.8 1188.8,1116.8 1188.8,1112.7 1189.9,1112.7 1189.9,1110.6 1191.7,1110.6 1192.6,1110.6 1193.5,1179.8 1194.7,1179.8 1195.8,1179.8 1195.8,1158.2 1197.0,1158.2 1197.0,1147.5 1198.1,1147.5 1198.1,1137.8 1199.2,1137.8 1199.2,1128.9 1200.4,1128.9 1200.4,1121.1 1201.5,1121.1 1201.5,1114.3 1202.6,1114.3 1202.6,1108.8 1203.7,1108.8 1203.7,1104.8 1204.9,1104.8 1204.9,1102.8 1206.7,1102.8 1207.6,1102.8 1208.5,1169.7 1209.7,1169.7 1210.8,1169.7 1210.8,1167.1 1211.9,1167.1 1211.9,1154.2 1213.1,1154.2 1213.1,1142.4 1214.2,1142.4 1214.2,1131.8 1215.3,1131.8 1215.3,1122.3 1216.5,1122.3 1216.5,1114.2 1217.6,1114.2 1217.6,1107.6 1218.7,1107.6 1218.7,1102.7 1219.9,1102.7 1219.9,1100.3 1221.6,1100.3 1222.5,1100.3 1223.4,1180.9 1224.6,1180.9 1225.8,1180.9 1225.8,1164.2 1226.9,1164.2 1226.9,1152.4 1228.0,1152.4 1228.0,1141.6 1229.2,1141.6 1229.2,1131.8 1230.3,1131.8 1230.3,1123.1 1231.4,1123.1 1231.4,1115.7 1232.6,1115.7 1232.6,1109.6 1233.7,1109.6 1233.7,1105.1 1234.8,1105.1 1234.8,1102.9 1236.6,1102.9 1237.5,1102.9 1238.4,1176.9 1239.6,1176.9 1240.7,1176.9 1240.7,1154.8 1241.9,1154.8 1241.9,1144.5 1243.0,1144.5 1243.0,1134.9 1244.1,1134.9 1244.1,1126.3 1245.3,1126.3 1245.3,1118.7 1246.4,1118.7 1246.4,1112.2 1247.5,1112.2 1247.5,1106.8 1248.7,1106.8 1248.7,1102.9 1249.8,1102.9 1249.8,1101.0 1251.6,1101.0 1252.5,1101.0 1253.4,1166.0 1254.6,1166.0 1255.7,1166.0 1255.7,1159.3 1256.8,1159.3 1256.8,1149.6 1258.0,1149.6 1258.0,1140.8 1259.1,1140.8 1259.1,1132.8 1260.2,1132.8 1260.2,1125.7 1261.4,1125.7 1261.4,1119.6 1262.5,1119.6 1262.5,1114.6 1263.6,1114.6 1263.6,1111.0 1264.8,1111.0 1264.8,1109.2 1266.6,1109.2 1267.5,1109.2 1268.4,1169.6 1269.6,1169.6 1270.7,1169.6 1270.7,1154.7 1271.8,1154.7 1271.8,1145.0 1272.9,1145.0 1272.9,1136.1 1274.1,1136.1 1274.1,1128.1 1275.2,1128.1 1275.2,1121.0 1276.3,1121.0 1276.3,1114.9 1277.5,1114.9 1277.5,1109.9 1278.6,1109.9 1278.6,1106.2 1279.7,1106.2 1279.7,1104.4 1281.5,1104.4 1282.4,1104.4 1283.3,1165.1 1284.5,1165.1 1285.7,1165.1 1285.7,1164.5 1286.8,1164.5 1286.8,1153.5 1287.9,1153.5 1287.9,1143.4 1289.0,1143.4 1289.0,1134.3 1290.2,1134.3 1290.2,1126.3 1291.3,1126.3 1291.3,1119.3 1292.4,1119.3 1292.4,1113.6 1293.6,1113.6 1293.6,1109.5 1294.7,1109.5 1294.7,1107.4 1296.5,1107.4 1297.4,1107.4 1298.3,1176.3 1299.5,1176.3 1300.6,1176.3 1300.6,1165.9 1301.8,1165.9 1301.8,1153.7 1302.9,1153.7 1302.9,1142.5 1304.0,1142.5 1304.0,1132.4 1305.1,1132.4 1305.1,1123.4 1306.3,1123.4 1306.3,1115.7 1307.4,1115.7 1307.4,1109.4 1308.5,1109.4 1308.5,1104.8 1309.7,1104.8 1309.7,1102.5 1311.5,1102.5 1312.4,1102.5 1313.3,1179.0 1314.5,1179.0 1315.6,1179.0 1315.6,1166.3 1316.7,1166.3 1316.7,1153.1 1317.9,1153.1 1317.9,1140.9 1319.0,1140.9 1319.0,1130.0 1320.1,1130.0 1320.1,1120.2 1321.2,1120.2 1321.2,1111.8 1322.4,1111.8 1322.4,1105.0 1323.5,1105.0 1323.5,1100.0 1324.6,1100.0 1324.6,1097.5 1326.4,1097.5 1327.3,1097.5 1328.2,1180.6 1329.4,1180.6 1330.6,1180.6 1330.6,1165.3 1331.7,1165.3 1331.7,1151.4 1332.8,1151.4 1332.8,1138.7 1334.0,1138.7 1334.0,1127.2 1335.1,1127.2 1335.1,1116.9 1336.2,1116.9 1336.2,1108.2 1337.3,1108.2 1337.3,1101.0 1338.5,1101.0 1338.5,1095.7 1339.6,1095.7 1339.6,1093.1 1341.4,1093.1 1342.3,1093.1 1343.2,1180.3 1344.4,1180.3 1345.5,1180.3 1345.5,1165.9 1346.7,1165.9 1346.7,1153.5 1347.8,1153.5 1347.8,1142.0 1348.9,1142.0 1348.9,1131.6 1350.1,1131.6 1350.1,1122.5 1351.2,1122.5 1351.2,1114.6 1352.3,1114.6 1352.3,1108.1 1353.4,1108.1 1353.4,1103.4 1354.6,1103.4 1354.6,1101.1 1356.4,1101.1 1357.3,1101.1 1358.2,1179.4 1359.4,1179.4 1360.5,1179.4 1360.5,1156.5 1361.6,1156.5 1361.6,1143.9 1362.8,1143.9 1362.8,1132.4 1363.9,1132.4 1363.9,1121.9 1365.0,1121.9 1365.0,1112.7 1366.2,1112.7 1366.2,1104.7 1367.3,1104.7 1367.3,1098.2 1368.4,1098.2 1368.4,1093.4 1369.6,1093.4 1369.6,1091.1 1371.3,1091.1 1372.2,1091.1 1373.1,1170.1 1374.3,1170.1 1375.5,1170.1 1375.5,1154.7 1376.6,1154.7 1376.6,1143.8 1377.7,1143.8 1377.7,1133.9 1378.9,1133.9 1378.9,1124.9 1380.0,1124.9 1380.0,1116.9 1381.1,1116.9 1381.1,1110.0 1382.3,1110.0 1382.3,1104.4 1383.4,1104.4 1383.4,1100.3 1384.5,1100.3 1384.5,1098.3 1386.3,1098.3 1387.2,1098.3 1388.1,1166.4 1389.3,1166.4 1390.4,1166.4 1390.4,1158.1 1391.6,1158.1 1391.6,1146.5 1392.7,1146.5 1392.7,1135.8 1393.8,1135.8 1393.8,1126.1 1395.0,1126.1 1395.0,1117.5 1396.1,1117.5 1396.1,1110.2 1397.2,1110.2 1397.2,1104.1 1398.4,1104.1 1398.4,1099.7 1399.5,1099.7 1399.5,1097.5 1401.3,1097.5 1402.2,1097.5 1403.1,1170.7 1404.3,1170.7 1405.4,1170.7 1405.4,1156.3 1406.5,1156.3 1406.5,1144.2 1407.7,1144.2 1407.7,1133.1 1408.8,1133.1 1408.8,1123.1 1409.9,1123.1 1409.9,1114.2 1411.1,1114.2 1411.1,1106.6 1412.2,1106.6 1412.2,1100.3 1413.3,1100.3 1413.3,1095.8 1414.5,1095.8 1414.5,1093.5 1416.3,1093.5 1417.2,1093.5 1418.1,1169.3 1419.3,1169.3 1420.4,1169.3 1420.4,1157.7 1421.5,1157.7 1421.5,1146.2 1422.6,1146.2 1422.6,1135.7 1423.8,1135.7 1423.8,1126.1 1424.9,1126.1 1424.9,1117.7 1426.0,1117.7 1426.0,1110.4 1427.2,1110.4 1427.2,1104.5 1428.3,1104.5 1428.3,1100.1 1429.4,1100.1 1429.4,1098.0 1431.2,1098.0 1432.1,1098.0 1433.0,1170.1 1434.2,1170.1 1435.4,1170.1 1435.4,1162.3 1436.5,1162.3 1436.5,1149.6 1437.6,1149.6 1437.6,1138.0 1438.7,1138.0 1438.7,1127.5 1439.9,1127.5 1439.9,1118.2 1441.0,1118.2 1441.0,1110.2 1442.1,1110.2 1442.1,1103.6 1443.3,1103.6 1443.3,1098.9 1444.4,1098.9 1444.4,1096.5 1446.2,1096.5 1447.1,1096.5 1448.0,1175.9 1449.2,1175.9 1450.3,1175.9 1450.3,1164.9 1451.5,1164.9 1451.5,1151.5 1452.6,1151.5 1452.6,1139.1 1453.7,1139.1 1453.7,1127.9 1454.8,1127.9 1454.8,1118.0 1456.0,1118.0 1456.0,1109.5 1457.1,1109.5 1457.1,1102.6 1458.2,1102.6 1458.2,1097.5 1459.4,1097.5 1459.4,1095.0 1461.2,1095.0 1462.1,1095.0 1463.0,1179.4 1464.2,1179.4 1465.3,1179.4 1465.3,1162.5 1466.4,1162.5 1466.4,1149.9 1467.6,1149.9 1467.6,1138.3 1468.7,1138.3 1468.7,1127.9 1469.8,1127.9 1469.8,1118.6 1470.9,1118.6 1470.9,1110.6 1472.1,1110.6 1472.1,1104.1 1473.2,1104.1 1473.2,1099.3 1474.3,1099.3 1474.3,1097.0 1476.1,1097.0 1477.0,1097.0 1477.9,1176.1 1479.1,1176.1 1480.3,1176.1 1480.3,1164.3 1481.4,1164.3 1481.4,1149.9 1482.5,1149.9 1482.5,1136.8 1483.7,1136.8 1483.7,1124.9 1484.8,1124.9 1484.8,1114.4 1485.9,1114.4 1485.9,1105.3 1487.0,1105.3 1487.0,1097.9 1488.2,1097.9 1488.2,1092.5 1489.3,1092.5 1489.3,1089.8 1491.1,1089.8 1492.0,1089.8 1492.9,1179.7 1494.1,1179.7 1495.2,1179.7 1495.2,1161.5 1496.4,1161.5 1496.4,1148.0 1497.5,1148.0 1497.5,1135.7 1498.6,1135.7 1498.6,1124.5 1499.8,1124.5 1499.8,1114.6 1500.9,1114.6 1500.9,1106.1 1502.0,1106.1 1502.0,1099.2 1503.1,1099.2 1503.1,1094.1 1504.3,1094.1 1504.3,1091.6 1506.1,1091.6 1507.0,1091.6 1507.9,1176.0 1509.1,1176.0 1510.2,1176.0 1510.2,1163.3 1511.3,1163.3 1511.3,1148.5 1512.5,1148.5 1512.5,1134.9 1513.6,1134.9 1513.6,1122.5 1514.7,1122.5 1514.7,1111.6 1515.9,1111.6 1515.9,1102.2 1517.0,1102.2 1517.0,1094.5 1518.1,1094.5 1518.1,1088.9 1519.3,1088.9 1519.3,1086.1 1521.0,1086.1 1521.9,1086.1 1522.8,1179.3 1524.0,1179.3 1525.2,1179.3 1525.2,1164.7 1526.3,1164.7 1526.3,1149.7 1527.4,1149.7 1527.4,1135.8 1528.6,1135.8 1528.6,1123.3 1529.7,1123.3 1529.7,1112.2 1530.8,1112.2 1530.8,1102.7 1532.0,1102.7 1532.0,1094.9 1533.1,1094.9 1533.1,1089.1 1534.2,1089.1 1534.2,1086.3 1536.0,1086.3 1536.9,1086.3 1537.8,1181.0 1539.0,1181.0 1540.1,1181.0 1540.1,1156.9 1541.3,1156.9 1541.3,1144.0 1542.4,1144.0 1542.4,1132.1 1543.5,1132.1 1543.5,1121.3 1544.7,1121.3 1544.7,1111.8 1545.8,1111.8 1545.8,1103.6 1546.9,1103.6 1546.9,1096.9 1548.1,1096.9 1548.1,1092.0 1549.2,1092.0 1549.2,1089.5 1551.0,1089.5 1551.9,1089.5 1552.8,1170.9 1554.0,1170.9 1555.1,1170.9 1555.1,1163.6 1556.2,1163.6 1556.2,1148.5 1557.4,1148.5 1557.4,1134.6 1558.5,1134.6 1558.5,1122.0 1559.6,1122.0 1559.6,1110.9 1560.8,1110.9 1560.8,1101.4 1561.9,1101.4 1561.9,1093.5 1563.0,1093.5 1563.0,1087.8 1564.2,1087.8 1564.2,1085.0 1566.0,1085.0 1566.9,1085.0 1567.8,1179.9 1569.0,1179.9 1570.1,1179.9 1570.1,1164.6 1571.2,1164.6 1571.2,1150.3 1572.3,1150.3 1572.3,1137.1 1573.5,1137.1 1573.5,1125.2 1574.6,1125.2 1574.6,1114.7 1575.7,1114.7 1575.7,1105.6 1576.9,1105.6 1576.9,1098.2 1578.0,1098.2 1578.0,1092.8 1579.1,1092.8 1579.1,1090.1 1580.9,1090.1 1581.8,1090.1 1582.7,1180.0 1583.9,1180.0 1585.1,1180.0 1585.1,1161.6 1586.2,1161.6 1586.2,1147.9 1587.3,1147.9 1587.3,1135.4 1588.4,1135.4 1588.4,1124.0 1589.6,1124.0 1589.6,1113.9 1590.7,1113.9 1590.7,1105.3 1591.8,1105.3 1591.8,1098.2 1593.0,1098.2 1593.0,1093.0 1594.1,1093.0 1594.1,1090.5 1595.9,1090.5 1596.8,1090.5 1597.7,1176.3 1598.9,1176.3 1600.0,1176.3 1600.0,1153.1 1601.2,1153.1 1601.2,1141.8 1602.3,1141.8 1602.3,1131.3 1603.4,1131.3 1603.4,1121.9 1604.5,1121.9 1604.5,1113.5 1605.7,1113.5 1605.7,1106.3 1606.8,1106.3 1606.8,1100.4 1607.9,1100.4 1607.9,1096.1 1609.1,1096.1 1609.1,1094.0 1610.9,1094.0 1611.8,1094.0 1612.7,1165.4 1613.9,1165.4 1615.0,1165.4 1615.0,1153.5 1616.1,1153.5 1616.1,1142.3 1617.3,1142.3 1617.3,1132.0 1618.4,1132.0 1618.4,1122.7 1619.5,1122.7 1619.5,1114.5 1620.6,1114.5 1620.6,1107.4 1621.8,1107.4 1621.8,1101.6 1622.9,1101.6 1622.9,1097.4 1624.0,1097.4 1624.0,1095.3 1625.8,1095.3 1626.7,1095.3 1627.6,1165.5 1628.8,1165.5 1630.0,1165.5 1630.0,1164.2 1631.1,1164.2 1631.1,1149.4 1632.2,1149.4 1632.2,1135.8 1633.4,1135.8 1633.4,1123.5 1634.5,1123.5 1634.5,1112.6 1635.6,1112.6 1635.6,1103.2 1636.7,1103.2 1636.7,1095.5 1637.9,1095.5 1637.9,1089.9 1639.0,1089.9 1639.0,1087.1 1640.8,1087.1 1641.7,1087.1 1642.6,1180.2 1643.8,1180.2 1644.9,1180.2 1644.9,1156.6 1646.1,1156.6 1646.1,1144.1 1647.2,1144.1 1647.2,1132.6 1648.3,1132.6 1648.3,1122.2 1649.5,1122.2 1649.5,1113.0 1650.6,1113.0 1650.6,1105.1 1651.7,1105.1 1651.7,1098.6 1652.8,1098.6 1652.8,1093.9 1654.0,1093.9 1654.0,1091.5 1655.8,1091.5 1656.7,1091.5 1657.6,1170.1 1658.8,1170.1 1659.9,1170.1 1659.9,1164.5 1661.0,1164.5 1661.0,1149.8 1662.2,1149.8 1662.2,1136.3 1663.3,1136.3 1663.3,1124.1 1664.4,1124.1 1664.4,1113.2 1665.6,1113.2 1665.6,1103.9 1666.7,1103.9 1666.7,1096.3 1667.8,1096.3 1667.8,1090.7 1669.0,1090.7 1669.0,1088.0 1670.7,1088.0 1671.6,1088.0 1672.5,1180.4 1673.7,1180.4 1674.9,1180.4 1674.9,1156.1 1676.0,1156.1 1676.0,1143.5 1677.1,1143.5 1677.1,1132.1 1678.3,1132.1 1678.3,1121.7 1679.4,1121.7 1679.4,1112.5 1680.5,1112.5 1680.5,1104.6 1681.7,1104.6 1681.7,1098.1 1682.8,1098.1 1682.8,1093.4 1683.9,1093.4 1683.9,1091.0 1685.7,1091.0 1686.6,1091.0 1687.5,1169.5 1688.7,1169.5 1689.8,1169.5 1689.8,1156.4 1691.0,1156.4 1691.0,1143.8 1692.1,1143.8 1692.1,1132.3 1693.2,1132.3 1693.2,1121.8 1694.4,1121.8 1694.4,1112.5 1695.5,1112.5 1695.5,1104.5 1696.6,1104.5 1696.6,1098.0 1697.8,1098.0 1697.8,1093.2 1698.9,1093.2 1698.9,1090.9 1700.7,1090.9 1701.6,1090.9 1702.5,1170.0 1703.7,1170.0 1704.8,1170.0 1704.8,1160.0 1705.9,1160.0 1705.9,1145.9 1707.1,1145.9 1707.1,1132.9 1708.2,1132.9 1708.2,1121.1 1709.3,1121.1 1709.3,1110.7 1710.5,1110.7 1710.5,1101.8 1711.6,1101.8 1711.6,1094.5 1712.7,1094.5 1712.7,1089.1 1713.9,1089.1 1713.9,1086.5 1715.7,1086.5 1716.6,1086.5 1717.5,1175.3 1718.7,1175.3 1719.8,1175.3 1719.8,1163.3 1720.9,1163.3 1720.9,1148.4 1722.0,1148.4 1722.0,1134.8 1723.2,1134.8 1723.2,1122.4 1724.3,1122.4 1724.3,1111.5 1725.4,1111.5 1725.4,1102.1 1726.6,1102.1 1726.6,1094.4 1727.7,1094.4 1727.7,1088.8 1728.8,1088.8 1728.8,1086.0 1730.6,1086.0 1731.5,1086.0 1732.4,1179.3 1733.6,1179.3 1734.8,1179.3 1734.8,1165.2 1735.9,1165.2 1735.9,1151.2 1737.0,1151.2 1737.0,1138.4 1738.1,1138.4 1738.1,1126.9 1739.3,1126.9 1739.3,1116.6 1740.4,1116.6 1740.4,1107.8 1741.5,1107.8 1741.5,1100.6 1742.7,1100.6 1742.7,1095.3 1743.8,1095.3 1743.8,1092.7 1745.6,1092.7 1746.5,1092.7 1747.4,1180.2 1748.6,1180.2 1749.7,1180.2 1749.7,1152.5 1750.9,1152.5 1750.9,1139.8 1752.0,1139.8 1752.0,1128.1 1753.1,1128.1 1753.1,1117.5 1754.2,1117.5 1754.2,1108.1 1755.4,1108.1 1755.4,1100.1 1756.5,1100.1 1756.5,1093.5 1757.6,1093.5 1757.6,1088.7 1758.8,1088.7 1758.8,1086.3 1760.6,1086.3 1761.5,1086.3 1762.4,1166.2 1763.0,1166.2"/>
</svg>

  </div>
</div>

<!-- ============ SCROLLBARS ============ -->
<div class="a" style="left:1900px;top:127px;width:20px;height:1051px;background:#f0f0f0"></div>
<div class="a" style="left:1900px;top:148px;width:19px;height:765px;background:#cdcdcd"></div>
<svg class="a" style="left:1904px;top:133px" width="12" height="8"><path d="M1.5 6.5 L6 2 L10.5 6.5" fill="none" stroke="#606060" stroke-width="1.6"/></svg>
<svg class="a" style="left:1904px;top:1163px" width="12" height="8"><path d="M1.5 1.5 L6 6 L10.5 1.5" fill="none" stroke="#606060" stroke-width="1.6"/></svg>
<div class="a" style="left:0;top:1178px;width:1900px;height:20px;background:#f0f0f0"></div>
<div class="a" style="left:21px;top:1179px;width:1396px;height:19px;background:#cdcdcd"></div>
<svg class="a" style="left:5px;top:1182px" width="10" height="12"><path d="M7 1.5 L2.5 6 L7 10.5" fill="none" stroke="#606060" stroke-width="1.6"/></svg>
<svg class="a" style="left:1884px;top:1182px" width="10" height="12"><path d="M2.5 1.5 L7 6 L2.5 10.5" fill="none" stroke="#606060" stroke-width="1.6"/></svg>
<div class="a" style="left:1900px;top:1178px;width:20px;height:20px;background:#fff"></div>
<div class="a" style="left:0;top:1198px;width:1920px;height:2px;background:#363636"></div><div class="a" style="left:60px;top:1198px;width:430px;height:2px;background:#f2f2f2"></div><div class="a" style="left:740px;top:1198px;width:60px;height:2px;background:#606060"></div>

<!-- ============ CONSOLE ============ -->
<div id="con" class="a">
  <svg class="a" style="left:9px;top:11px" width="21" height="16" viewBox="0 0 21 16"><rect x="0.5" y="0.5" width="20" height="15" fill="#000" stroke="#777"/><rect x="1" y="1" width="19" height="2" fill="#aaa"/><text x="2" y="12.5" font-family="Liberation Sans" font-size="8" font-weight="bold" fill="#fff">C:\_</text></svg>
  <div class="a t" style="left:34px;top:11px;font-size:15px;color:#000">Administrator: ioBroker(Hoenow2) Kommandozeile - node.exe</div>
  <svg class="a" style="left:947px;top:10px" width="16" height="14"><path d="M1 7.5 H13" stroke="#111" stroke-width="1"/></svg>
  <svg class="a" style="left:1005px;top:11px" width="14" height="14"><rect x="1.5" y="1.5" width="11" height="11" fill="none" stroke="#111" stroke-width="1.1"/></svg>
  <svg class="a" style="left:1064px;top:12px" width="14" height="14"><path d="M1 0.5 L13 12.5 M13 0.5 L1 12.5" stroke="#111" stroke-width="1.25"/></svg>
  <div id="ctext" class="a">konnte nicht gefunden werden.

C:\Program Files\iobroker\Hoenow2\nodejs&gt;dir
 Volume in Laufwerk C: hat keine Bezeichnung.
 Volumeseriennummer: 56D3-DFBB

 Verzeichnis von C:\Program Files\iobroker\Hoenow2\nodejs

01.06.2020  15:06    &lt;DIR&gt;          .
01.06.2020  15:06    &lt;DIR&gt;          ..
22.10.2019  17:31            53.458 CHANGELOG.md
22.04.2020  18:22             2.951 install_tools.bat
22.10.2019  17:31            70.122 LICENSE
26.05.2020  10:00        29.803.160 node.exe
14.02.2020  18:04               702 nodevars.bat
10.10.2019  07:01             9.031 node_etw_provider.man
22.10.2019  18:12    &lt;DIR&gt;          node_modules
22.10.2019  17:31             4.974 node_perfctr_provider.man
10.10.2019  07:01               930 npm
10.10.2019  07:01               483 npm.cmd
10.10.2019  07:01               922 npx
10.10.2019  07:01               539 npx.cmd
22.10.2019  17:31            27.446 README.md
              12 Datei(en),     29.974.718 Bytes
               3 Verzeichnis(se), 438.179.225.600 Bytes frei

C:\Program Files\iobroker\Hoenow2\nodejs&gt;node.exe
Welcome to Node.js v12.17.0.
Type &quot;.help&quot; for more information.
&gt; <span style="display:inline-block;width:9px;height:4px;background:#ddd;vertical-align:-4px;margin-left:1px"></span></div>
  <div class="a" style="left:1080px;top:37px;width:21px;height:600px;background:#f0f0f0"></div>
  <div class="a" style="left:1081px;top:62px;width:19px;height:21px;background:#c9c9c9"></div>
  <svg class="a" style="left:1085px;top:44px" width="12" height="8"><path d="M1.5 6.5 L6 2 L10.5 6.5" fill="none" stroke="#5a5a5a" stroke-width="1.8"/></svg>
  <svg class="a" style="left:1085px;top:624px" width="12" height="8"><path d="M1.5 1.5 L6 6 L10.5 1.5" fill="none" stroke="#5a5a5a" stroke-width="1.8"/></svg>
</div>

</body></html>
